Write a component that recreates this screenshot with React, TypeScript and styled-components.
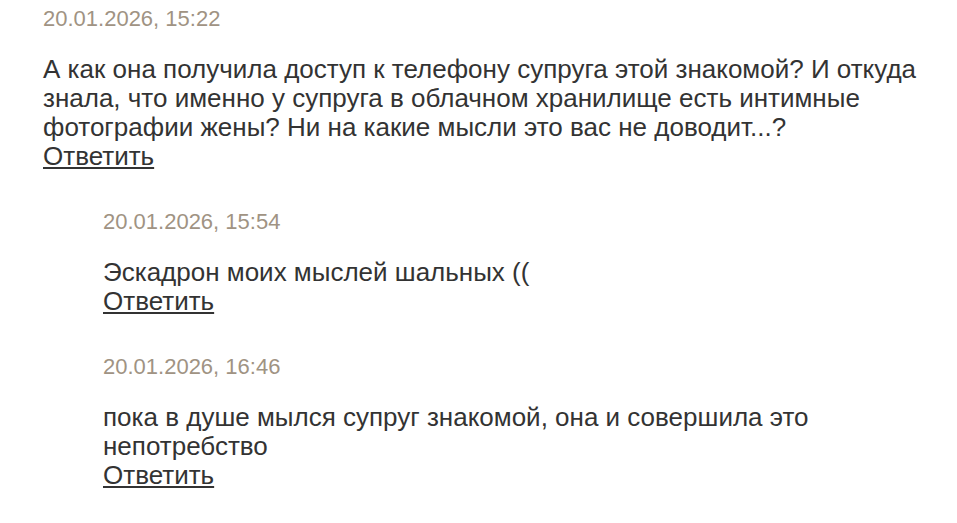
import React from "react";
import styled, { createGlobalStyle } from "styled-components";

const Global = createGlobalStyle`
  html, body { margin: 0; padding: 0; background: #fff; }
  body { font-family: "Liberation Sans", Arial, Helvetica, sans-serif; color: #333; }
`;

const Page = styled.div`
  padding: 8px 30px 0 43px;
  display: flex;
  flex-direction: column;
  gap: 40px;
`;

const Comment = styled.div<{ $level: number }>`
  margin-left: ${(p) => p.$level * 60}px;
  display: flex;
  flex-direction: column;
`;

const Date = styled.div`
  font-size: 22px;
  line-height: 22px;
  color: #a09383;
  margin-bottom: 25px;
`;

const Text = styled.p`
  margin: 0;
  font-size: 26px;
  line-height: 29px;
  color: #333;
`;

const Reply = styled.a`
  font-size: 26px;
  line-height: 29px;
  color: #333;
  text-decoration: underline;
  align-self: flex-start;
  cursor: pointer;
`;

const comments = [
  {
    level: 0,
    date: "20.01.2026, 15:22",
    text: "А как она получила доступ к телефону супруга этой знакомой? И откуда знала, что именно у супруга в облачном хранилище есть интимные фотографии жены? Ни на какие мысли это вас не доводит...?",
  },
  { level: 1, date: "20.01.2026, 15:54", text: "Эскадрон моих мыслей шальных ((" },
  {
    level: 1,
    date: "20.01.2026, 16:46",
    text: "пока в душе мылся супруг знакомой, она и совершила это непотребство",
  },
];

export default function App() {
  return (
    <>
      <Global />
      <Page>
        {comments.map((c, i) => (
          <Comment key={i} $level={c.level}>
            <Date>{c.date}</Date>
            <Text>{c.text}</Text>
            <Reply>Ответить</Reply>
          </Comment>
        ))}
      </Page>
    </>
  );
}
